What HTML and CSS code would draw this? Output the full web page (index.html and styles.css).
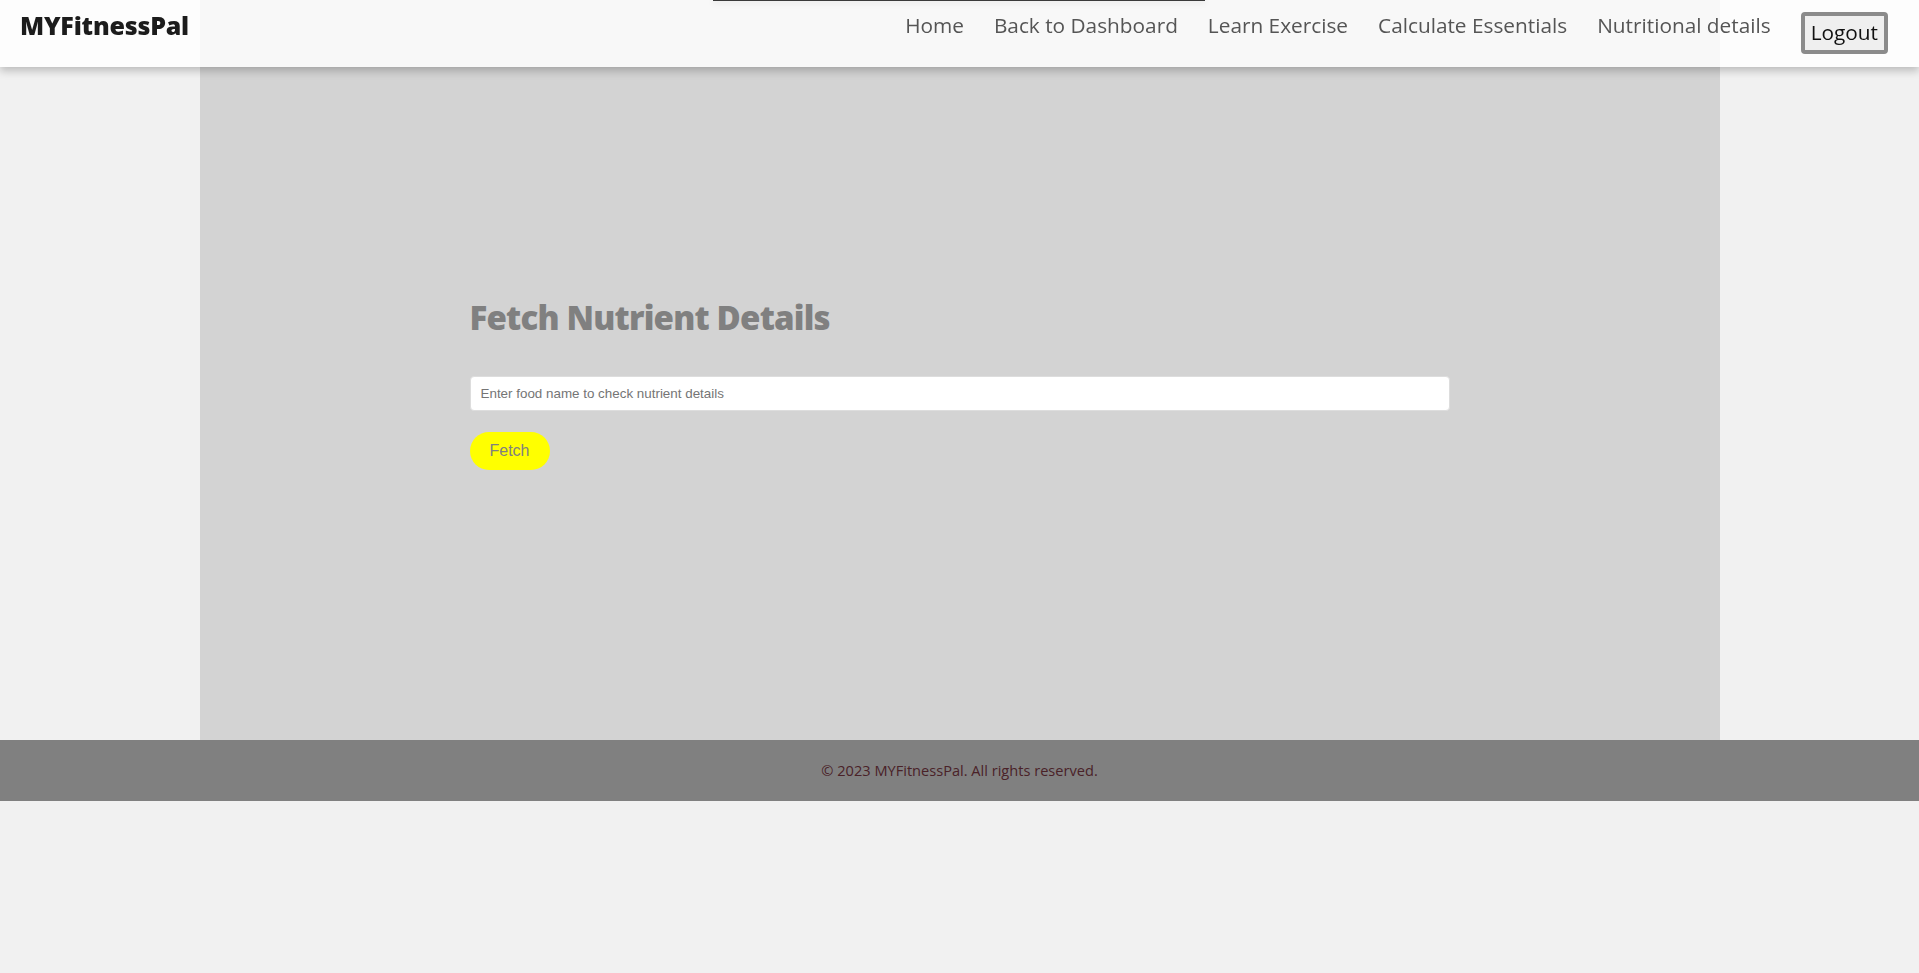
FILE: index.html
```html
<!DOCTYPE html>
<html lang="en">
<head>
<meta charset="utf-8">
<title>MYFitnessPal - Nutritional details</title>
<link rel="stylesheet" href="styles.css">
</head>
<body>
<div class="topline"></div>
<header class="header">
  <div class="logo">MYFitnessPal</div>
  <nav class="nav">
    <a class="nav-link" href="#">Home</a>
    <a class="nav-link" href="#">Back to Dashboard</a>
    <a class="nav-link" href="#">Learn Exercise</a>
    <a class="nav-link" href="#">Calculate Essentials</a>
    <a class="nav-link" href="#">Nutritional details</a>
    <button class="logout" type="button">Logout</button>
  </nav>
</header>
<main class="main">
  <section class="content">
    <h1 class="title">Fetch Nutrient Details</h1>
    <input class="food-input" type="text" placeholder="Enter food name to check nutrient details">
    <button class="fetch" type="button">Fetch</button>
  </section>
</main>
<footer class="footer">© 2023 MYFitnessPal. All rights reserved.</footer>
</body>
</html>
```
FILE: styles.css
```css
html, body {
  margin: 0;
  padding: 0;
}
body {
  background: #f1f1f1;
  font-family: "Open Sans", "DejaVu Sans", sans-serif;
}
.topline {
  position: absolute;
  top: 0;
  left: 713px;
  width: 492px;
  height: 1px;
  background: #3a3a3a;
  box-shadow: 0 1px 6px rgba(0,0,0,0.25);
  z-index: 20;
}
.header {
  position: fixed;
  top: 0;
  left: 0;
  right: 0;
  height: 67px;
  box-sizing: border-box;
  padding: 0 31px 0 20px;
  display: flex;
  justify-content: space-between;
  align-items: flex-start;
  background: rgba(255,255,255,0.83);
  box-shadow: 0 4px 8px rgba(0,0,0,0.22);
  z-index: 10;
}
.logo {
  font-size: 25px;
  line-height: 51px;
  font-weight: 800;
  color: #1c1c1c;
  letter-spacing: -0.2px;
}
.nav {
  display: flex;
  align-items: flex-start;
  gap: 30px;
}
.nav-link {
  font-size: 20.8px;
  line-height: 51px;
  color: #555;
  text-decoration: none;
}
.logout {
  margin-top: 12px;
  height: 42px;
  padding: 0 6px 2px;
  border: 4px solid #8b8b8b;
  border-radius: 4px;
  background: #efefef;
  color: #111;
  font-family: "Open Sans", "DejaVu Sans", sans-serif;
  font-size: 20.8px;
}
.main {
  width: 1520px;
  margin: 0 auto;
  height: 740px;
  background: #d3d3d3;
}
.content {
  padding: 298px 270px 0;
  display: flex;
  flex-direction: column;
  align-items: flex-start;
}
.title {
  margin: 0 0 38px;
  font-size: 33px;
  line-height: 40px;
  font-weight: 800;
  letter-spacing: -0.8px;
  color: #808080;
}
.food-input {
  width: 980px;
  height: 35px;
  box-sizing: border-box;
  padding: 0 10px;
  border: 1px solid #ddd;
  border-radius: 4px;
  background: #fff;
  font-family: "Liberation Sans", Arial, sans-serif;
  font-size: 13.4px;
  margin: 0 0 21px;
}
.food-input::placeholder {
  color: #757575;
}
.fetch {
  width: 80px;
  height: 38px;
  border: none;
  border-radius: 20px;
  background: #ffff00;
  color: #808080;
  font-family: "Liberation Sans", Arial, sans-serif;
  font-size: 16px;
}
.footer {
  height: 61px;
  line-height: 60px;
  background: #808080;
  text-align: center;
  font-size: 14.6px;
  color: #4a2228;
}
```
